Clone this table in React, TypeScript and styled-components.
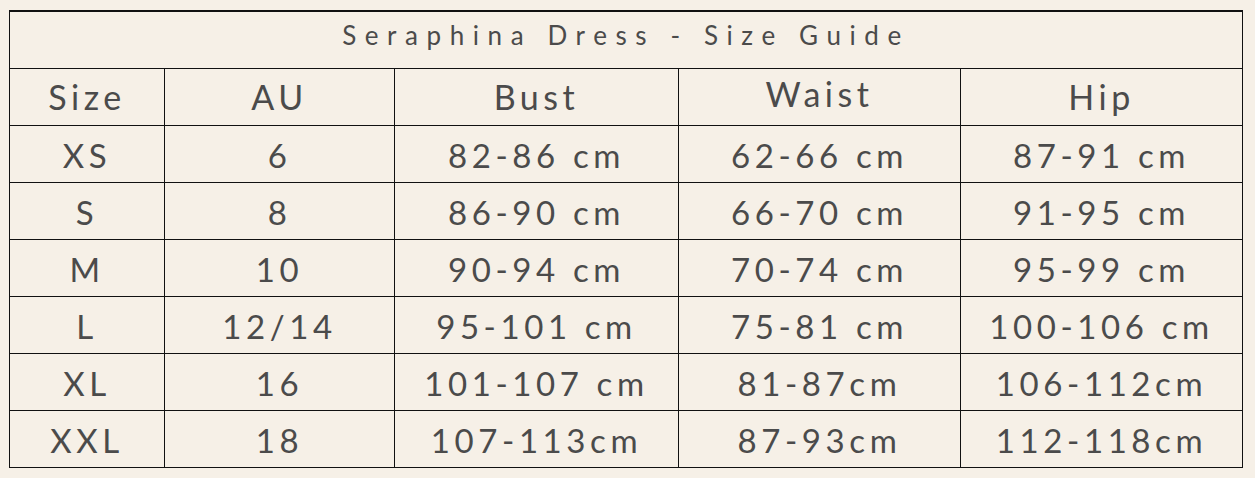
import React from 'react';
import styled, {createGlobalStyle} from 'styled-components';

const GlobalStyle = createGlobalStyle`
    html, body {
        margin: 0;
        background: #f6f0e7;
    }
`;

const Page = styled.main`
    width: 1255px;
    height: 478px;
    padding: 10px 0 0 9px;
    box-sizing: border-box;
    background: #f6f0e7;
    font-family: Lato, 'Open Sans', sans-serif;
    color: #4b4b4b;
`;

const Table = styled.table`
    border-collapse: collapse;
    table-layout: fixed;
    width: 1234px;
`;

const Row = styled.tr`
    height: 57px;
`;

const TitleCell = styled.th`
    box-sizing: border-box;
    height: 57px;
    padding: 0 0 9px;
    border: 1px solid #111;
    border-top: 2px solid #111;
    font-size: 26px;
    font-weight: 400;
    line-height: 30px;
    letter-spacing: 8.6px;
    text-align: center;
    vertical-align: middle;
`;

const HeadCell = styled.th<{$lift?: number}>`
    box-sizing: border-box;
    height: 57px;
    padding: 0 0 ${({$lift}) => ($lift || 0) * 5}px;
    border: 1px solid #111;
    font-size: 34px;
    font-weight: 400;
    line-height: 40px;
    letter-spacing: 4.5px;
    text-align: center;
    vertical-align: middle;
`;

const Cell = styled.td`
    box-sizing: border-box;
    height: 57px;
    padding: 3px 0 0;
    border: 1px solid #111;
    font-size: 33px;
    line-height: 40px;
    letter-spacing: 4.6px;
    text-align: center;
    vertical-align: middle;
    white-space: nowrap;
`;

const columns = [
    {label: 'Size', width: 155},
    {label: 'AU', width: 230},
    {label: 'Bust', width: 284},
    {label: 'Waist', width: 282, lift: 1},
    {label: 'Hip', width: 282},
];

const rows = [
    ['XS', '6', '82-86 cm', '62-66 cm', '87-91 cm'],
    ['S', '8', '86-90 cm', '66-70 cm', '91-95 cm'],
    ['M', '10', '90-94 cm', '70-74 cm', '95-99 cm'],
    ['L', '12/14', '95-101 cm', '75-81 cm', '100-106 cm'],
    ['XL', '16', '101-107 cm', '81-87cm', '106-112cm'],
    ['XXL', '18', '107-113cm', '87-93cm', '112-118cm'],
];

export default function App() {
    return (
        <Page>
            <GlobalStyle />
            <Table>
                <colgroup>
                    {columns.map((c) => (
                        <col key={c.label} style={{width: c.width}} />
                    ))}
                </colgroup>
                <thead>
                    <Row>
                        <TitleCell colSpan={5}>Seraphina Dress - Size Guide</TitleCell>
                    </Row>
                    <Row>
                        {columns.map((c) => (
                            <HeadCell key={c.label} $lift={c.lift}>
                                {c.label}
                            </HeadCell>
                        ))}
                    </Row>
                </thead>
                <tbody>
                    {rows.map((row) => (
                        <Row key={row[0]}>
                            {row.map((value, i) => (
                                <Cell key={i}>{value}</Cell>
                            ))}
                        </Row>
                    ))}
                </tbody>
            </Table>
        </Page>
    );
}
